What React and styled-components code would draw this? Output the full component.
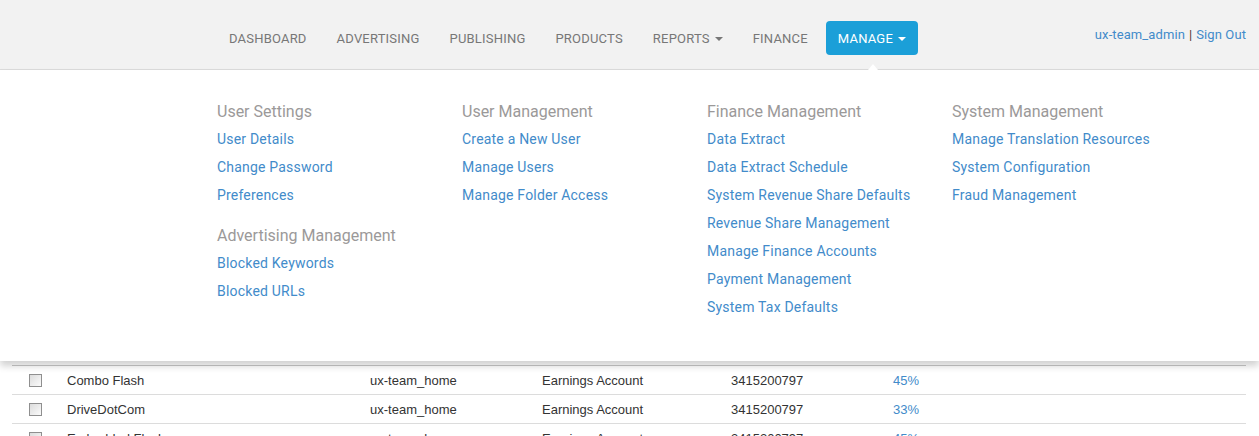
import styled, { createGlobalStyle } from 'styled-components'

const GlobalStyle = createGlobalStyle`
  html, body {
    margin: 0;
    padding: 0;
    background: #fff;
    font-family: Roboto, "Liberation Sans", Arial, sans-serif;
    overflow: hidden;
  }
  a {
    text-decoration: none;
  }
`;

const menuGroups = [
  [
    { title: 'User Settings', links: ['User Details', 'Change Password', 'Preferences'] },
    { title: 'Advertising Management', links: ['Blocked Keywords', 'Blocked URLs'] },
  ],
  [
    { title: 'User Management', links: ['Create a New User', 'Manage Users', 'Manage Folder Access'] },
  ],
  [
    {
      title: 'Finance Management',
      links: [
        'Data Extract',
        'Data Extract Schedule',
        'System Revenue Share Defaults',
        'Revenue Share Management',
        'Manage Finance Accounts',
        'Payment Management',
        'System Tax Defaults',
      ],
    },
  ],
  [
    {
      title: 'System Management',
      links: ['Manage Translation Resources', 'System Configuration', 'Fraud Management'],
    },
  ],
];

const rows = [
  { name: 'Combo Flash', owner: 'ux-team_home', account: 'Earnings Account', id: '3415200797', share: '45%' },
  { name: 'DriveDotCom', owner: 'ux-team_home', account: 'Earnings Account', id: '3415200797', share: '33%' },
  { name: 'Embedded Flash', owner: 'ux-team_home', account: 'Earnings Account', id: '3415200797', share: '45%' },
];

const navItems = [
  { label: 'Dashboard' },
  { label: 'Advertising' },
  { label: 'Publishing' },
  { label: 'Products' },
  { label: 'Reports', caret: true },
  { label: 'Finance' },
  { label: 'Manage', caret: true, active: true },
];

const App = () => {
  return (
    <>
      <GlobalStyle />
      <Header>
        <NavList>
          {navItems.map((item) => (
            <NavItem key={item.label} $active={item.active}>
              {item.label}
              {item.caret && <Caret $active={item.active} />}
              {item.active && <Pointer />}
            </NavItem>
          ))}
        </NavList>
        <UserBox>
          <a href="#">ux-team_admin</a>
          <Sep>|</Sep>
          <a href="#">Sign Out</a>
        </UserBox>
      </Header>

      <MegaMenu>
        {menuGroups.map((col, i) => (
          <MenuColumn key={i}>
            {col.map((group) => (
              <MenuGroup key={group.title}>
                <GroupTitle>{group.title}</GroupTitle>
                {group.links.map((l) => (
                  <MenuLink key={l} href="#">{l}</MenuLink>
                ))}
              </MenuGroup>
            ))}
          </MenuColumn>
        ))}
      </MegaMenu>

      <Table>
        {rows.map((r) => (
          <Row key={r.name}>
            <Cell><Check /></Cell>
            <Cell>{r.name}</Cell>
            <Cell>{r.owner}</Cell>
            <Cell>{r.account}</Cell>
            <Cell>{r.id}</Cell>
            <Cell $link>{r.share}</Cell>
          </Row>
        ))}
      </Table>
    </>
  );
}

export default App

const Header = styled.div`
  display: flex;
  justify-content: space-between;
  align-items: flex-start;
  height: 69px;
  background: #f2f2f2;
  border-bottom: 1px solid #dcdcdc;
  padding: 0 13px 0 214px;
  box-sizing: content-box;
`;

const NavList = styled.ul`
  display: flex;
  align-items: center;
  list-style: none;
  margin: 0;
  padding: 21px 0 0;
  height: 34px;
`;

const NavItem = styled.li`
  position: relative;
  display: flex;
  align-items: center;
  height: 34px;
  padding: 0 ${(p) => (p.$active ? '12px' : '15px')};
  margin-left: ${(p) => (p.$active ? '3px' : '0')};
  font-size: 13px;
  letter-spacing: 0.2px;
  text-transform: uppercase;
  color: ${(p) => (p.$active ? '#fff' : '#777')};
  background: ${(p) => (p.$active ? '#1b9fd8' : 'transparent')};
  border-radius: 4px;
  cursor: pointer;
`;

const Caret = styled.span`
  display: inline-block;
  margin-left: 5px;
  margin-top: 1px;
  width: 0;
  height: 0;
  border-left: 4px solid transparent;
  border-right: 4px solid transparent;
  border-top: 4px solid ${(p) => (p.$active ? '#fff' : '#777')};
`;

const Pointer = styled.span`
  position: absolute;
  left: 50%;
  bottom: -15px;
  margin-left: -4px;
  width: 0;
  height: 0;
  border-left: 5px solid transparent;
  border-right: 5px solid transparent;
  border-bottom: 6px solid #fff;
  z-index: 3;
`;

const UserBox = styled.div`
  padding-top: 27px;
  font-size: 13px;
  letter-spacing: 0.1px;
  color: #428bca;

  a {
    color: #428bca;
  }
`;

const Sep = styled.span`
  color: #553333;
  margin: 0 4px;
`;

const MegaMenu = styled.div`
  position: relative;
  z-index: 2;
  display: grid;
  grid-template-columns: repeat(4, 245px);
  height: 291px;
  padding: 28px 0 0 217px;
  box-sizing: border-box;
  background: #fff;
  box-shadow: 0 5px 7px rgba(0, 0, 0, 0.18);
`;

const MenuColumn = styled.div`
  display: flex;
  flex-direction: column;
  gap: 13px;
`;

const MenuGroup = styled.div`
  display: flex;
  flex-direction: column;
`;

const GroupTitle = styled.div`
  font-size: 16px;
  line-height: 27px;
  height: 27px;
  color: #9b9999;
`;

const MenuLink = styled.a`
  font-size: 14px;
  line-height: 28px;
  letter-spacing: 0.2px;
  color: #428bca;
`;

const Table = styled.div`
  margin: 4px 13px 0 12px;
  border-top: 1px solid #c8c8c8;
  font-family: "Liberation Sans", Arial, sans-serif;
  font-size: 13px;
  color: #333;
`;

const Row = styled.div`
  display: grid;
  grid-template-columns: 55px 303px 172px 189px 162px 1fr;
  align-items: center;
  height: 28px;
  border-bottom: 1px solid #dcdcdc;
`;

const Cell = styled.div`
  color: ${(p) => (p.$link ? '#428bca' : '#333')};
  white-space: nowrap;
`;

const Check = styled.span`
  display: block;
  width: 11px;
  height: 11px;
  margin-left: 17px;
  border: 1px solid #8f8f8f;
  background: linear-gradient(135deg, #dcdcdc, #fbfbfb);
`;
